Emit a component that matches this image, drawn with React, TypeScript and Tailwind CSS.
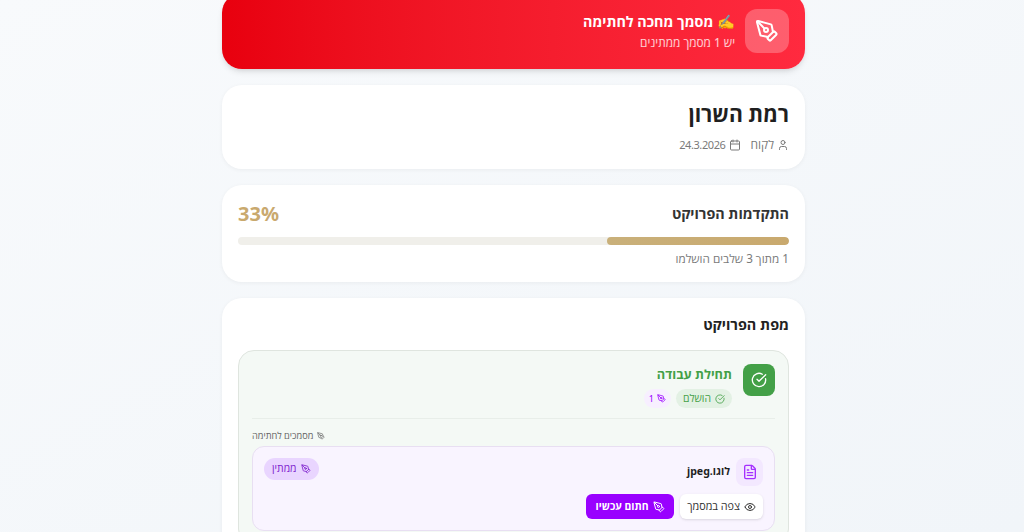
import { Calendar, CircleCheckBig, Eye, FileText, PenTool, User } from 'lucide-react';

export default function App() {
  return (
    <div dir="rtl" className="h-[532px] overflow-hidden bg-gradient-to-br from-[#f8fafc] to-[#f1f5f9] pl-[3px] font-['Noto_Sans','Open_Sans',sans-serif]">
      <div className="mx-auto -mt-[7px] flex w-[583px] flex-col gap-4">
        {/* signature banner */}
        <div className="flex items-center gap-[10px] rounded-[20px] bg-gradient-to-l from-[#ff2a3f] to-[#e8000e] p-4 shadow-md">
          <div className="flex h-11 w-11 shrink-0 items-center justify-center rounded-xl bg-white/25">
            <PenTool className="h-6 w-6 text-white" />
          </div>
          <div>
            <div className="text-[14.3px] leading-[22px] font-bold text-white">✍️ מסמך מחכה לחתימה</div>
            <div className="text-[11.8px] leading-[18px] text-white/80">יש 1 מסמך ממתינים</div>
          </div>
        </div>

        <div className="rounded-[20px] bg-white p-4 shadow-[0_1px_4px_rgba(0,0,0,0.05)]">
          <h1 className="text-[21.2px] leading-[26px] font-bold text-[#1f1f1f]">רמת השרון</h1>
          <div className="mt-[9px] flex items-center gap-[9px] text-[12px] leading-[17px] text-[#7a7a7a]">
            <span className="flex items-center gap-[3px]">
              <User className="h-3 w-3" />
              לקוח
            </span>
            <span className="flex items-center gap-1">
              <Calendar className="h-3 w-3" />
              <span className="text-[11px] tracking-[-0.4px]">24.3.2026</span>
            </span>
          </div>
        </div>

        <div className="rounded-[20px] bg-white p-4 shadow-[0_1px_4px_rgba(0,0,0,0.05)]">
          <div className="flex h-[26px] items-center justify-between">
            <h2 className="text-[14.3px] font-bold text-[#333333]">התקדמות הפרויקט</h2>
            <span className="text-[20px] leading-[26px] font-bold text-[#c9a96e]">33%</span>
          </div>
          <div className="mt-[10px] h-2 overflow-hidden rounded-full bg-[#f0efea]">
            <div className="h-full w-[33%] rounded-full bg-gradient-to-l from-[#c9a96e] to-[#c9b07a]" />
          </div>
          <div className="mt-[5px] text-[11.7px] leading-[16px] text-[#7a7a7a]">1 מתוך 3 שלבים הושלמו</div>
        </div>

        <div className="rounded-[20px] bg-white p-4 shadow-[0_1px_4px_rgba(0,0,0,0.05)]">
          <h2 className="mb-[14px] text-[14.4px] leading-[22px] font-bold text-[#222222]">מפת הפרויקט</h2>
          <div className="rounded-2xl border border-[#dfe5df] bg-[#f4f9f5] p-[13px]">
            <div className="flex items-start gap-[11px] border-b border-[#e8eee9] pb-[10px]">
              <div className="flex h-8 w-8 shrink-0 items-center justify-center rounded-lg bg-[#43a047]">
                <CircleCheckBig className="h-4 w-4 text-white" />
              </div>
              <div>
                <div className="text-[12.8px] leading-[20px] font-bold text-[#43a047]">תחילת עבודה</div>
                <div className="mt-[5px] flex items-center gap-[5px]">
                  <span className="flex h-[19px] items-center gap-1 rounded-full bg-[#e3f1e4] px-[7px] text-[10.4px] font-medium text-[#43a047]">
                    <CircleCheckBig className="h-[10px] w-[10px]" />
                    הושלם
                  </span>
                  <span className="flex h-[19px] items-center gap-[3px] rounded-full bg-[#f7efff] px-[5px] text-[9px] text-[#9900ff]">
                    <PenTool className="h-[9px] w-[9px]" />1
                  </span>
                </div>
              </div>
            </div>
            <div className="mt-[10px] flex items-center justify-end gap-1 text-[9.2px] leading-[14px] text-[#666666]">
              <PenTool className="h-2 w-2" />
              מסמכים לחתימה
            </div>
            <div className="mt-[3px] rounded-xl border border-[#e8dff2] bg-[#f9f4ff] p-[11px]">
              <div className="flex items-start justify-between">
                <div className="flex items-center gap-[6px]">
                  <div className="flex h-7 w-[27px] items-center justify-center rounded-lg bg-[#f3e8ff]">
                    <FileText className="h-4 w-4 text-[#a530ff]" />
                  </div>
                  <span className="text-[10.6px] font-bold text-[#1f1f1f]">לוגו.jpeg</span>
                </div>
                <span className="flex h-[22px] items-center gap-1 rounded-full bg-[#e9d5ff] px-2 text-[10.4px] font-medium text-[#7e22ce]">
                  <PenTool className="h-[10px] w-[10px]" />
                  ממתין
                </span>
              </div>
              <div className="mt-2 flex gap-[6px]">
                <button className="flex h-[25px] items-center gap-1 rounded-md bg-white px-[7px] text-[10.8px] text-[#333333] shadow-sm">
                  <Eye className="h-3 w-3" />
                  צפה במסמך
                </button>
                <button className="flex h-[25px] items-center gap-1 rounded-md bg-[#9900ff] px-[9.5px] text-[10.4px] font-bold text-white">
                  <PenTool className="h-3 w-3" />
                  חתום עכשיו
                </button>
              </div>
            </div>
          </div>
        </div>
      </div>
    </div>
  );
}
